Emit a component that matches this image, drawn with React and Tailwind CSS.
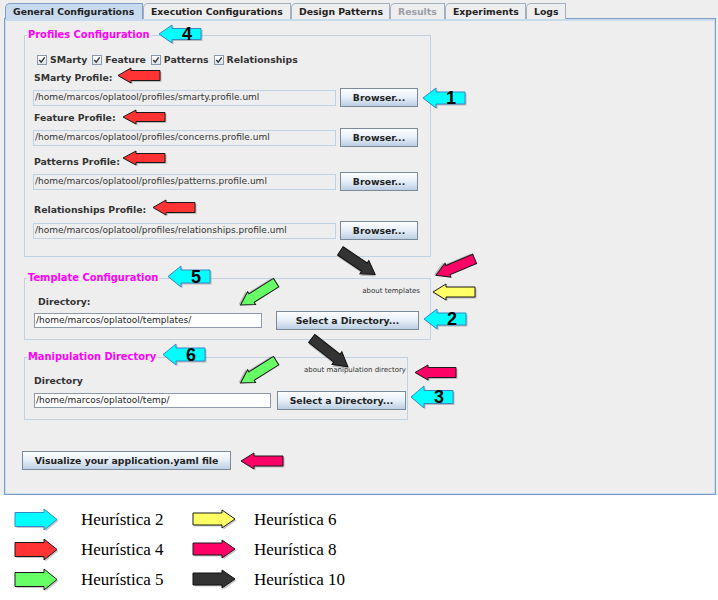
import React from "react";

const CYAN = "#00ffff";
const RED = "#ff3333";
const GREEN = "#66ff66";
const YELLOW = "#ffff66";
const PINK = "#ff0066";
const DARK = "#333333";

const Arrow = ({ w = 46, h = 20, bh, hl, fill, stroke = "#1a1a1a", left = false, num }) => {
  const W = w - 2;
  const HH = h - 2;
  const b = bh ?? Math.round(HH * 0.56);
  const H = hl ?? Math.round(W * 0.32);
  const y1 = (HH - b) / 2;
  const y2 = (HH + b) / 2;
  let pts = [
    [1, y1],
    [W - H, y1],
    [W - H, 1],
    [W - 1, HH / 2],
    [W - H, HH - 1],
    [W - H, y2],
    [1, y2],
  ];
  if (left) pts = pts.map(([x, y]) => [W - x, y]);
  const s = pts.map((p) => p.join(",")).join(" ");
  const tx = left ? H + (W - H) / 2 : (W - H) / 2;
  return (
    <svg width={w} height={h} viewBox={`0 0 ${w} ${h}`} className="block overflow-visible">
      <polygon points={s} transform="translate(1.5 1.5)" fill="#000" opacity="0.22" />
      <polygon points={s} fill={fill} stroke={stroke} strokeWidth="1" />
      {num && (
        <text
          x={tx}
          y={HH / 2 + 6}
          textAnchor="middle"
          fontFamily="'Liberation Sans Narrow','Liberation Sans',sans-serif"
          fontWeight="bold"
          fontSize="18"
          fill="#000"
        >
          {num}
        </text>
      )}
    </svg>
  );
};

const marks = [
  { c: "left-[158px] top-[24px]", w: 46, h: 22, fill: CYAN, stroke: "#3a86c8", left: true, num: "4" },
  { c: "left-[117px] top-[67px]", w: 46, h: 19, fill: RED, left: true },
  { c: "left-[422px] top-[87px]", w: 46, h: 24, fill: CYAN, stroke: "#3a86c8", left: true, num: "1" },
  { c: "left-[122px] top-[109px]", w: 46, h: 18, fill: RED, left: true },
  { c: "left-[122px] top-[150px]", w: 46, h: 18, fill: RED, left: true },
  { c: "left-[152px] top-[199px]", w: 46, h: 19, fill: RED, left: true },
  { c: "left-[335px] top-[254px] rotate-[34deg]", w: 46, h: 20, fill: DARK, stroke: "#111" },
  { c: "left-[431px] top-[257px] rotate-[157deg]", w: 46, h: 19, fill: PINK },
  { c: "left-[167px] top-[265px]", w: 46, h: 25, fill: CYAN, stroke: "#3a86c8", left: true, num: "5" },
  { c: "left-[234px] top-[284px] rotate-[148deg]", w: 46, h: 19, fill: GREEN },
  { c: "left-[432px] top-[283px]", w: 46, h: 20, fill: YELLOW, left: true },
  { c: "left-[423px] top-[308px]", w: 46, h: 24, fill: CYAN, stroke: "#3a86c8", left: true, num: "2" },
  { c: "left-[305px] top-[344px] rotate-[38deg]", w: 50, h: 20, fill: DARK, stroke: "#111" },
  { c: "left-[162px] top-[343px]", w: 46, h: 25, fill: CYAN, stroke: "#3a86c8", left: true, num: "6" },
  { c: "left-[234px] top-[362px] rotate-[148deg]", w: 46, h: 19, fill: GREEN },
  { c: "left-[414px] top-[364px]", w: 45, h: 19, fill: PINK, left: true },
  { c: "left-[410px] top-[385px]", w: 46, h: 26, fill: CYAN, stroke: "#3a86c8", left: true, num: "3" },
  { c: "left-[240px] top-[452px]", w: 46, h: 20, fill: PINK, left: true },
];

const tabs = [
  { name: "General Configurations", w: "w-[138px]", on: true },
  { name: "Execution Configurations", w: "w-[148px]" },
  { name: "Design Patterns", w: "w-[99px]" },
  { name: "Results", w: "w-[55px]", off: true },
  { name: "Experiments", w: "w-[81px]" },
  { name: "Logs", w: "w-[40px]" },
];

const Check = ({ label }) => (
  <div className="flex items-center gap-[3px]">
    <span className="w-[10px] h-[10px] border border-[#8a98aa] bg-linear-to-b from-white to-[#dce5ef] flex items-center justify-center">
      <svg width="8" height="8" viewBox="0 0 8 8">
        <path d="M1.3 4 L3.2 6.2 L6.7 1.4" stroke="#333" strokeWidth="1.4" fill="none" />
      </svg>
    </span>
    <span>{label}</span>
  </div>
);

const Button = ({ children, w }) => (
  <div
    className={`${w} h-[19px] shrink-0 border border-[#7a8a99] bg-linear-to-b from-[#fdfeff] via-[#e6eef7] to-[#bccfe3] flex items-center justify-center font-bold text-[#222]`}
  >
    {children}
  </div>
);

const Field = ({ value, w, white }) => (
  <div
    className={
      white
        ? `${w} h-[15px] shrink-0 border border-[#8e9aab] bg-white flex items-center pl-[1px] text-[9px] text-[#222]`
        : `${w} h-[16px] shrink-0 border border-[#c2d1e2] bg-[#eeeeee] flex items-center pl-[1px] text-[9px] text-[#333]`
    }
  >
    {value}
  </div>
);

const Profile = ({ label, path, mt, rt }) => (
  <>
    <div className={`${mt} h-[14px] pl-[9px] leading-[14px] font-bold`}>{label}</div>
    <div className={`${rt} h-[19px] pl-[8px] flex items-center gap-[4px]`}>
      <Field w="w-[303px]" value={path} />
      <Button w="w-[78px]">Browser...</Button>
    </div>
  </>
);

const Legend = ({ children }) => (
  <legend className="ml-[2px] px-[1px] h-[14px] leading-[14px] text-[9.9px] font-bold text-[#ff00ff]">
    {children}
  </legend>
);

export default function App() {
  return (
    <div className="w-[718px] h-[600px] bg-white relative overflow-hidden font-['DejaVu_Sans',sans-serif] text-[9.3px] text-[#333]">
      <div className="h-[495px] bg-[#eeeeee] pt-[3px]">
        <div className="flex h-[15px] pl-[5px]">
          {tabs.map((t) => (
            <div
              key={t.name}
              className={`${t.w} h-[16px] border border-b-0 rounded-tl-[5px] pl-[7px] leading-[15px] font-bold ${
                t.on
                  ? "bg-[#c8daee] border-[#7f9dc6] text-[#222]"
                  : "bg-[#eeeeee] border-[#a3b0c2] " + (t.off ? "text-[#9aa0a8]" : "text-[#222]")
              }`}
            >
              {t.name}
            </div>
          ))}
        </div>
        <div className="ml-[4px] w-[712px] h-[477px] border border-[#7f9dc6] shadow-[inset_0_2px_0_#c8daee,inset_1px_0_0_#c8daee,inset_-1px_0_0_#c8daee,inset_0_-1px_0_#c8daee] pl-[19px] pt-[9px]">
          <fieldset className="w-[407px] border border-[#c2d1e2] pb-[16px]">
            <Legend>Profiles Configuration</Legend>
            <div className="mt-[11px] h-[14px] pl-[12px] flex items-center gap-[5px] font-bold">
              <Check label="SMarty" />
              <Check label="Feature" />
              <Check label="Patterns" />
              <Check label="Relationships" />
            </div>
            <Profile mt="mt-[4px]" rt="mt-[3px]" label="SMarty Profile:" path="/home/marcos/oplatool/profiles/smarty.profile.uml" />
            <Profile mt="mt-[4px]" rt="mt-[3px]" label="Feature Profile:" path="/home/marcos/oplatool/profiles/concerns.profile.uml" />
            <Profile mt="mt-[8px]" rt="mt-[3px]" label="Patterns Profile:" path="/home/marcos/oplatool/profiles/patterns.profile.uml" />
            <Profile mt="mt-[12px]" rt="mt-[4px]" label="Relationships Profile:" path="/home/marcos/oplatool/profiles/relationships.profile.uml" />
          </fieldset>

          <fieldset className="mt-[14px] w-[407px] border border-[#c2d1e2] pb-[9px]">
            <Legend>Template Configuration</Legend>
            <div className="h-[10px] leading-[10px] mt-[1px] pr-[10px] text-right text-[7px]">about templates</div>
            <div className="h-[12px] leading-[12px] pl-[13px] font-bold">Directory:</div>
            <div className="mt-[3px] h-[19px] pl-[9px] flex items-center gap-[14px]">
              <Field white w="w-[228px]" value="/home/marcos/oplatool/templates/" />
              <Button w="w-[143px]">Select a Directory...</Button>
            </div>
          </fieldset>

          <fieldset className="mt-[10px] w-[384px] border border-[#c2d1e2] pb-[9px]">
            <Legend>Manipulation Directory</Legend>
            <div className="h-[10px] leading-[10px] mt-[1px] pr-[1px] text-right text-[7px]">about manipulation directory</div>
            <div className="h-[12px] leading-[12px] pl-[9px] font-bold">Directory</div>
            <div className="mt-[4px] h-[19px] pl-[9px] flex items-center gap-[6px]">
              <Field white w="w-[237px]" value="/home/marcos/oplatool/temp/" />
              <Button w="w-[129px]">Select a Directory...</Button>
            </div>
          </fieldset>

          <div className="mt-[31px] -ml-[2px]">
            <Button w="w-[209px]">Visualize your application.yaml file</Button>
          </div>
        </div>
      </div>

      <div className="pl-[14px] pt-[10px] font-['Liberation_Serif',serif] text-[17px] text-black">
        {[
          [[CYAN, "#3a86c8", "Heurística 2"], [YELLOW, "#1a1a1a", "Heurística 6"]],
          [[RED, "#1a1a1a", "Heurística 4"], [PINK, "#1a1a1a", "Heurística 8"]],
          [[GREEN, "#1a1a1a", "Heurística 5"], [DARK, "#111", "Heurística 10"]],
        ].map((row, i) => (
          <div key={i} className="h-[30px] flex items-center">
            <div className="w-[178px] flex items-center gap-[21px]">
              <Arrow w={46} h={25} bh={14} hl={14} fill={row[0][0]} stroke={row[0][1]} />
              <span>{row[0][2]}</span>
            </div>
            <div className="flex items-center gap-[16px]">
              <Arrow w={46} h={22} bh={12} hl={14} fill={row[1][0]} stroke={row[1][1]} />
              <span>{row[1][2]}</span>
            </div>
          </div>
        ))}
      </div>

      {marks.map((m, i) => (
        <div key={i} className={`absolute ${m.c}`}>
          <Arrow w={m.w} h={m.h} fill={m.fill} stroke={m.stroke} left={m.left} num={m.num} />
        </div>
      ))}
    </div>
  );
}
